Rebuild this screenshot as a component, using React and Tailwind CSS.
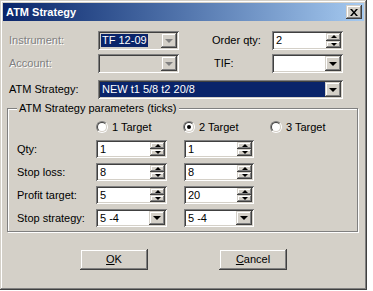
const SUNKEN = 'shadow-[inset_1px_1px_#808080,inset_-1px_-1px_#ffffff,inset_2px_2px_#404040,inset_-2px_-2px_#d4d0c8]';
const RAISED = 'shadow-[inset_-1px_-1px_#404040,inset_1px_1px_#d4d0c8,inset_-2px_-2px_#808080,inset_2px_2px_#ffffff]';

function ArrowDown({ disabled }) {
  return (
    <div
      className={`w-0 h-0 border-x-[4px] border-x-transparent border-t-[4px] ${
        disabled ? 'border-t-[#808080]' : 'border-t-black'
      }`}
    />
  );
}

function DropButton({ disabled }) {
  return (
    <div className={`w-[16px] h-full bg-[#d4d0c8] flex items-center justify-center ${RAISED}`}>
      <ArrowDown disabled={disabled} />
    </div>
  );
}

function Combo({ width, value, disabled, highlight, fill }) {
  return (
    <div className={`${width} h-full flex p-[2px] ${disabled ? 'bg-[#d4d0c8]' : 'bg-white'} ${SUNKEN}`}>
      <div className={`flex-1 flex items-center pl-[1px] ${fill ? 'bg-[#0a246a] text-white' : ''}`}>
        {value && (
          <span className={`px-[1px] leading-[13px] ${highlight ? 'bg-[#0a246a] text-white' : ''}`}>{value}</span>
        )}
      </div>
      <DropButton disabled={disabled} />
    </div>
  );
}

function Spin({ width, value }) {
  return (
    <div className={`${width} h-full flex p-[2px] bg-white ${SUNKEN}`}>
      <div className="flex-1 flex items-center pl-[2px]">{value}</div>
      <div className="w-[15px] flex flex-col">
        <div className={`flex-1 bg-[#d4d0c8] flex items-center justify-center ${RAISED}`}>
          <div className="w-0 h-0 border-x-[3px] border-x-transparent border-b-[3px] border-b-black" />
        </div>
        <div className={`flex-1 bg-[#d4d0c8] flex items-center justify-center ${RAISED}`}>
          <div className="w-0 h-0 border-x-[3px] border-x-transparent border-t-[3px] border-t-black" />
        </div>
      </div>
    </div>
  );
}

function Radio({ label, checked }) {
  return (
    <div className="w-[87px] flex items-center gap-[4px]">
      <div className="w-[12px] h-[12px] rounded-full border border-t-[#808080] border-l-[#808080] border-b-white border-r-white">
        <div className="w-full h-full rounded-full bg-white border border-t-[#404040] border-l-[#404040] border-b-[#d4d0c8] border-r-[#d4d0c8] flex items-center justify-center">
          {checked && <div className="w-[4px] h-[4px] rounded-full bg-black" />}
        </div>
      </div>
      <span>{label}</span>
    </div>
  );
}

function Button({ children }) {
  return (
    <div className={`w-[68px] h-[21px] bg-[#d4d0c8] flex items-center justify-center ${RAISED}`}>
      {children}
    </div>
  );
}

const PARAMS = [
  { label: 'Qty:', a: '1', b: '1' },
  { label: 'Stop loss:', a: '8', b: '8' },
  { label: 'Profit target:', a: '5', b: '20' },
];

export default function App() {
  return (
    <div className="min-h-screen bg-white">
      <div
        className="w-[367px] h-[290px] bg-[#d4d0c8] p-[3px] text-[11px] text-black shadow-[inset_-1px_-1px_#404040,inset_1px_1px_#d4d0c8,inset_-2px_-2px_#808080,inset_2px_2px_#ffffff]"
        style={{ fontFamily: '"Liberation Sans", Arial, sans-serif' }}
      >
        {/* Title bar */}
        <div className="h-[18px] flex items-center justify-between pl-[3px] pr-[2px] bg-linear-to-r from-[#0a246a] to-[#a6caf0]">
          <span className="text-white font-bold">ATM Strategy</span>
          <div className={`w-[16px] h-[14px] bg-[#d4d0c8] flex items-center justify-center ${RAISED}`}>
            <svg width="8" height="7" viewBox="0 0 8 7">
              <path d="M0 0h2l2 2.5L6 0h2L5 3.5 8 7H6L4 4.5 2 7H0l3-3.5z" fill="black" />
            </svg>
          </div>
        </div>

        <div className="px-[4px] pt-[10px]">
          {/* Instrument / Order qty */}
          <div className="ml-[2px] flex items-center h-[19px]">
            <span className="w-[89px] text-[#808080] [text-shadow:1px_1px_#ffffff]">Instrument:</span>
            <Combo width="w-[81px]" value="TF 12-09" disabled highlight />
            <span className="ml-[33px] w-[60px]">Order qty:</span>
            <Spin width="w-[71px]" value="2" />
          </div>

          {/* Account / TIF */}
          <div className="ml-[2px] mt-[4px] flex items-center h-[19px]">
            <span className="w-[89px] text-[#808080] [text-shadow:1px_1px_#ffffff]">Account:</span>
            <Combo width="w-[81px]" disabled />
            <span className="ml-[35px] w-[58px]">TIF:</span>
            <Combo width="w-[71px]" />
          </div>

          {/* ATM Strategy */}
          <div className="ml-[2px] mt-[7px] flex items-center h-[19px]">
            <span className="w-[89px]">ATM Strategy:</span>
            <Combo width="w-[245px]" value="NEW t1 5/8 t2 20/8" fill />
          </div>

          {/* Parameters group */}
          <fieldset className="mt-[3px] w-[346px] h-[130px] p-0 border border-[#808080] shadow-[1px_1px_#ffffff,inset_1px_1px_#ffffff]">
            <legend className="ml-[9px] px-[2px] bg-[#d4d0c8] leading-[13px]">ATM Strategy parameters (ticks)</legend>

            <div className="pl-[88px] mt-[6px] flex items-center h-[12px]">
              <Radio label="1 Target" />
              <Radio label="2 Target" checked />
              <Radio label="3 Target" />
            </div>

            <div className="pl-[9px] mt-[7px] flex flex-col gap-[5px]">
              {PARAMS.map((p) => (
                <div key={p.label} className="flex items-center h-[18px]">
                  <span className="w-[79px]">{p.label}</span>
                  <Spin width="w-[71px]" value={p.a} />
                  <div className="w-[17px]" />
                  <Spin width="w-[70px]" value={p.b} />
                </div>
              ))}
              <div className="flex items-center h-[18px]">
                <span className="w-[79px]">Stop strategy:</span>
                <Combo width="w-[71px]" value="5 -4" />
                <div className="w-[17px]" />
                <Combo width="w-[70px]" value="5 -4" />
              </div>
            </div>
          </fieldset>

          {/* Buttons */}
          <div className="mt-[17px] pl-[73px] flex gap-[71px]">
            <Button><span><span className="underline">O</span>K</span></Button>
            <Button><span><span className="underline">C</span>ancel</span></Button>
          </div>
        </div>
      </div>
    </div>
  );
}
